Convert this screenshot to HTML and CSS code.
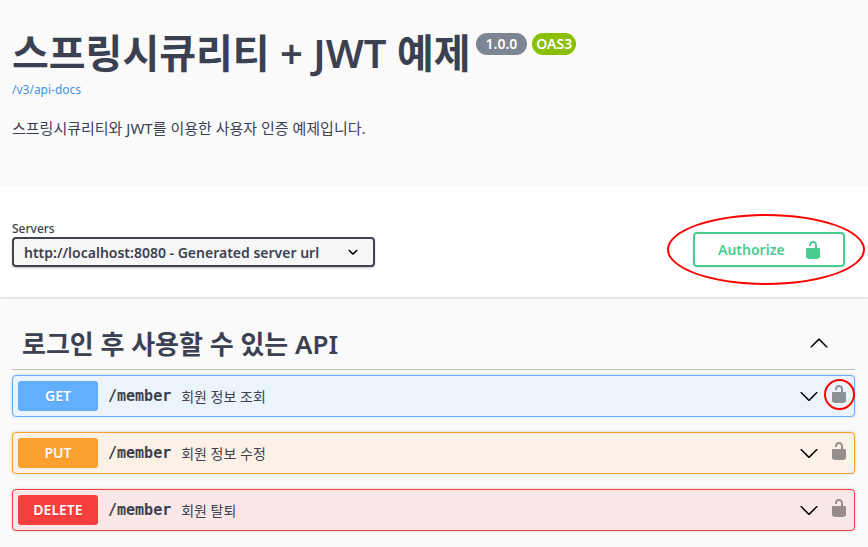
FILE: index.html
```html
<!DOCTYPE html>
<html lang="ko">
<head>
    <meta charset="UTF-8">
    <meta name="viewport" content="width=device-width, initial-scale=1.0">
    <title>Swagger UI</title>
    <link rel="stylesheet" href="styles.css">
</head>
<body>
    <svg class="sprite" aria-hidden="true">
        <symbol id="unlocked" viewBox="0 0 20 20">
            <path d="M15.8 8H14V5.6C14 2.703 12.665 1 10 1 7.334 1 6 2.703 6 5.6V6h2v-.801C8 3.754 8.797 3 10 3c1.203 0 2 .754 2 2.199V8H4c-.553 0-1 .646-1 1.199V17c0 .549.428 1.139.951 1.307l1.197.387C5.672 18.861 6.55 19 7.1 19h5.8c.549 0 1.428-.139 1.951-.307l1.196-.387c.524-.167.953-.757.953-1.306V9.199C17 8.646 16.352 8 15.8 8z"/>
        </symbol>
        <symbol id="arrow-down" viewBox="0 0 20 20">
            <path d="M17.418 6.109c.272-.268.709-.268.979 0s.271.701 0 .969l-7.908 7.83c-.27.268-.707.268-.979 0l-7.908-7.83c-.27-.268-.27-.701 0-.969.271-.268.709-.268.979 0L10 13.25l7.418-7.141z"/>
        </symbol>
        <symbol id="arrow-up" viewBox="0 0 20 20">
            <path d="M17.418 13.408c.272.268.709.268.979 0s.271-.701 0-.969l-7.908-7.83c-.27-.268-.707-.268-.979 0l-7.908 7.83c-.27.268-.27.701 0 .969.271.268.709.268.979 0L10 6.267l7.418 7.141z"/>
        </symbol>
        <symbol id="select-arrow" viewBox="0 0 20 20">
            <path d="M13.418 7.859c.271-.268.709-.268.978 0 .27.268.272.701 0 .969l-3.908 3.83c-.27.268-.707.268-.979 0l-3.908-3.83c-.27-.267-.27-.701 0-.969.271-.268.709-.268.978 0L10 11l3.418-3.141z"/>
        </symbol>
    </svg>

    <header class="info">
        <div class="title-row">
            <h1 class="title">스프링시큐리티 + JWT 예제</h1>
            <span class="badge">1.0.0</span>
            <span class="badge badge-oas">OAS3</span>
        </div>
        <a class="docs-link" href="/v3/api-docs">/v3/api-docs</a>
        <p class="description">스프링시큐리티와 JWT를 이용한 사용자 인증 예제입니다.</p>
    </header>

    <section class="scheme">
        <div class="servers">
            <label class="servers-label" for="servers">Servers</label>
            <div class="select-wrap">
                <select class="servers-select" id="servers">
                    <option>http://localhost:8080 - Generated server url</option>
                </select>
                <svg class="select-icon"><use href="#select-arrow"/></svg>
            </div>
        </div>
        <div class="authorize-wrap">
            <button class="authorize" type="button">
                <span>Authorize</span>
                <svg class="icon"><use href="#unlocked"/></svg>
            </button>
            <span class="marker marker-button"></span>
        </div>
    </section>

    <main class="operations">
        <div class="tag">
            <h2 class="tag-title">로그인 후 사용할 수 있는 API</h2>
            <button class="icon-button" type="button" aria-label="Collapse">
                <svg class="icon"><use href="#arrow-up"/></svg>
            </button>
        </div>

        <div class="opblock get">
            <span class="method">GET</span>
            <a class="path" href="#get">/member</a>
            <span class="summary">회원 정보 조회</span>
            <button class="icon-button" type="button" aria-label="Expand">
                <svg class="icon"><use href="#arrow-down"/></svg>
            </button>
            <button class="icon-button lock" type="button" aria-label="Authorization">
                <svg class="icon"><use href="#unlocked"/></svg>
                <span class="marker marker-lock"></span>
            </button>
        </div>

        <div class="opblock put">
            <span class="method">PUT</span>
            <a class="path" href="#put">/member</a>
            <span class="summary">회원 정보 수정</span>
            <button class="icon-button" type="button" aria-label="Expand">
                <svg class="icon"><use href="#arrow-down"/></svg>
            </button>
            <button class="icon-button lock" type="button" aria-label="Authorization">
                <svg class="icon"><use href="#unlocked"/></svg>
            </button>
        </div>

        <div class="opblock delete">
            <span class="method">DELETE</span>
            <a class="path" href="#delete">/member</a>
            <span class="summary">회원 탈퇴</span>
            <button class="icon-button" type="button" aria-label="Expand">
                <svg class="icon"><use href="#arrow-down"/></svg>
            </button>
            <button class="icon-button lock" type="button" aria-label="Authorization">
                <svg class="icon"><use href="#unlocked"/></svg>
            </button>
        </div>
    </main>
</body>
</html>
```
FILE: styles.css
```css
* {
    box-sizing: border-box;
}
body {
    margin: 0;
    background: #fafafa;
    color: #3b4151;
    font-family: "Noto Sans", "Noto Sans CJK KR", sans-serif;
    font-size: 14px;
}
h1, h2, p {
    margin: 0;
}
button, select {
    font-family: inherit;
    color: inherit;
}
.sprite {
    display: none;
}
.icon {
    display: block;
    width: 20px;
    height: 20px;
    fill: currentColor;
}
.icon-button {
    padding: 0;
    border: none;
    background: none;
    color: #000;
    cursor: pointer;
}

/* Info header */
.info {
    padding: 26px 12px 48px;
}
.title-row {
    display: flex;
    align-items: flex-start;
    gap: 5px;
}
.title {
    font-size: 40px;
    line-height: 54px;
    font-weight: 600;
}
.badge {
    margin-top: 7px;
    padding: 0 10px;
    border-radius: 11px;
    background: #7d8492;
    color: #fff;
    font-size: 14px;
    line-height: 22px;
    font-weight: 600;
}
.badge-oas {
    padding: 0 4px;
    background: #89bf04;
}
.docs-link {
    display: block;
    color: #4990e2;
    font-size: 12px;
    line-height: 20px;
    text-decoration: none;
}
.description {
    margin-top: 18px;
    font-size: 15px;
    line-height: 20px;
}

/* Servers and authorize */
.scheme {
    display: flex;
    justify-content: space-between;
    align-items: flex-end;
    padding: 34px 23px 30px 12px;
    background: #fff;
    box-shadow: 0 1px 2px rgba(0, 0, 0, 0.15);
}
.servers-label {
    display: block;
    font-size: 12px;
    line-height: 17px;
    font-weight: 500;
}
.select-wrap {
    position: relative;
}
.servers-select {
    display: block;
    width: 363px;
    height: 30px;
    padding: 0 40px 0 10px;
    border: 2px solid #41444e;
    border-radius: 4px;
    background: #f7f7f7;
    box-shadow: 0 1px 2px rgba(0, 0, 0, 0.25);
    font-size: 14px;
    font-weight: 600;
    appearance: none;
}
.select-icon {
    position: absolute;
    top: 5px;
    right: 12px;
    width: 20px;
    height: 20px;
    pointer-events: none;
}
.authorize-wrap {
    position: relative;
}
.authorize {
    display: flex;
    justify-content: space-between;
    align-items: center;
    width: 152px;
    height: 35px;
    padding: 0 20px 0 23px;
    border: 2px solid #49cc90;
    border-radius: 4px;
    background: transparent;
    box-shadow: 0 1px 2px rgba(0, 0, 0, 0.1);
    color: #49cc90;
    font-size: 14px;
    font-weight: 600;
    cursor: pointer;
}

/* Red highlight rings */
.marker {
    position: absolute;
    border: 2px solid #ff0000;
    border-radius: 50%;
    pointer-events: none;
}
.marker-button {
    inset: -18px -20px -18px -26px;
}
.marker-lock {
    inset: -5px -6px -6px -5px;
}

/* Operations */
.operations {
    padding: 21px 13px 16px 12px;
}
.tag {
    display: flex;
    justify-content: space-between;
    align-items: center;
    height: 52px;
    margin-bottom: 5px;
    padding: 0 26px 0 10px;
    border-bottom: 1px solid #bfc0c4;
}
.tag-title {
    font-size: 26px;
    line-height: 36px;
    font-weight: 600;
}
.opblock {
    display: flex;
    align-items: center;
    height: 42px;
    margin-bottom: 15px;
    padding: 0 5px;
    border: 1px solid;
    border-radius: 4px;
    box-shadow: 0 0 3px rgba(0, 0, 0, 0.19);
}
.method {
    width: 80px;
    border-radius: 3px;
    color: #fff;
    font-size: 14px;
    line-height: 30px;
    font-weight: 600;
    text-align: center;
    text-shadow: 0 1px 0 rgba(0, 0, 0, 0.1);
}
.path {
    padding: 0 10px;
    color: #3b4151;
    font-family: "DejaVu Sans Mono", monospace;
    font-size: 15px;
    font-weight: 600;
    text-decoration: none;
}
.summary {
    flex: 1;
    font-size: 14px;
}
.lock {
    position: relative;
    margin: 0 0 4px 10px;
    color: rgba(0, 0, 0, 0.4);
}
.get {
    border-color: #61affe;
    background: #ebf3fb;
}
.get .method {
    background: #61affe;
}
.put {
    border-color: #fca130;
    background: #fbf1e6;
}
.put .method {
    background: #fca130;
}
.delete {
    border-color: #f93e3e;
    background: #fae7e7;
}
.delete .method {
    background: #f93e3e;
}
```
